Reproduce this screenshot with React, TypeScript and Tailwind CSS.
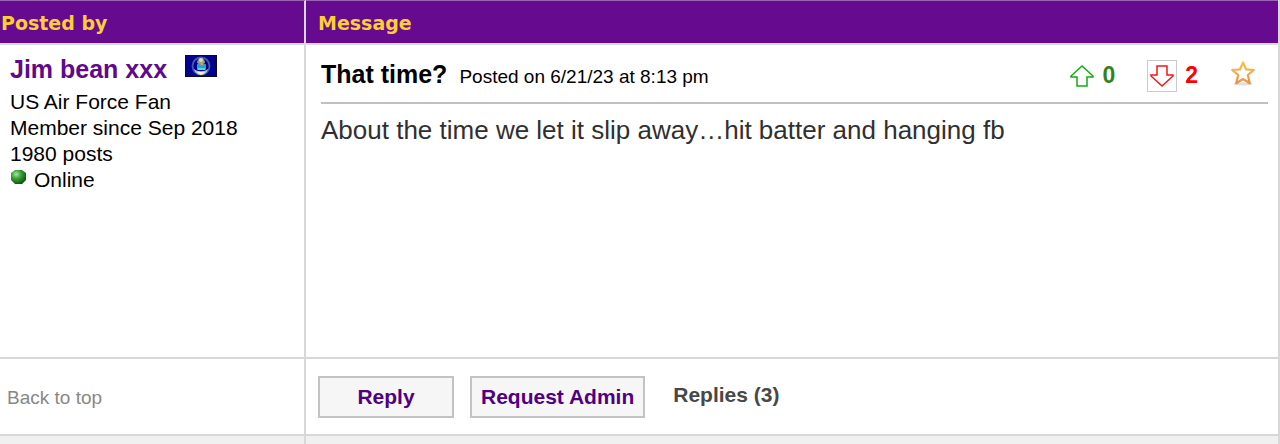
const FlagIcon = () => (
    <svg width="32" height="22" viewBox="0 0 32 22" role="img" aria-label="US Air Force">
        <rect x="0.5" y="0.5" width="31" height="21" fill="#02058c" stroke="#0b0c24" />
        <circle cx="16" cy="11" r="8.5" fill="none" stroke="#4a58ac" strokeWidth="1.8" />
        <path d="M9 14c3 3 11 3 14 0-1 4-4 6-7 6s-6-2-7-6z" fill="#a9c9c4" />
        <path d="M12 17h8l-4 3z" fill="#f2f0dc" />
        <rect x="12" y="9" width="9" height="6" rx="1" fill="#2f9fd0" />
        <path d="M13 13h7v2h-7z" fill="#55d4e4" />
        <path d="M12 8c0-3 2-5 4-5s4 2 4 5l-4 2z" fill="#9b9c88" />
        <circle cx="16" cy="5" r="2" fill="#d9d6bd" />
        <circle cx="17" cy="9" r="1.3" fill="#d9a43a" />
    </svg>
);

const OnlineIcon = () => (
    <svg width="16" height="16" viewBox="0 0 16 16" aria-hidden="true">
        <defs>
            <radialGradient id="online" cx="0.35" cy="0.3" r="0.75">
                <stop offset="0" stopColor="#a4e8a0" />
                <stop offset="0.4" stopColor="#3fa53f" />
                <stop offset="1" stopColor="#075407" />
            </radialGradient>
        </defs>
        <path d="M5 1h7l4 3v7l-4 4H5l-4-4V4z" fill="url(#online)" />
    </svg>
);

const UpIcon = () => (
    <svg width="24" height="22" viewBox="0 0 24 22" fill="white" stroke="#10ad10" strokeWidth="1.5" aria-hidden="true">
        <path d="M12 1L1 11v1h6v9h10v-9h6v-1z" />
    </svg>
);

const DownIcon = () => (
    <svg width="24" height="22" viewBox="0 0 24 22" fill="white" stroke="#fa1414" strokeWidth="1.5" aria-hidden="true">
        <path d="M12 21L1 11v-1h6V1h10v9h6v1z" />
    </svg>
);

const StarIcon = () => (
    <svg width="26" height="26" viewBox="0 0 26 26" aria-hidden="true">
        <defs>
            <linearGradient id="star" x1="0" y1="0" x2="0" y2="1">
                <stop offset="0" stopColor="#f8c34c" />
                <stop offset="1" stopColor="#e8924a" />
            </linearGradient>
        </defs>
        <ellipse cx="13" cy="24" rx="10" ry="1.5" fill="#dedede" />
        <path
            d="M13 2.500l3 6.800 7.800.7-6 5 2 8.200-6.800-4.200L6.200 23.200l2-8.200-6-5 7.800-.7z"
            fill="white"
            stroke="url(#star)"
            strokeWidth="2.2"
            strokeLinejoin="round"
        />
    </svg>
);

const App = () => {
    return (
        <div className="w-full bg-[#f0f0f0] font-['Liberation_Sans',Arial,sans-serif] text-black">
            <table className="w-full table-fixed border-separate border-spacing-0 border-r-2 border-[#d8d8d8] bg-white">
                <thead className="bg-[#660a8f] text-left font-['DejaVu_Sans',Verdana,sans-serif] text-[19px] leading-10 text-[#fbce33]">
                    <tr>
                        <th className="w-[306px] border-t border-r-2 border-b-2 border-t-[#9a63b3] border-r-[#d8d8d8] border-b-[#d8d8d8] px-px pt-0.5">Posted by</th>
                        <th className="border-t border-b-2 border-t-[#9a63b3] border-b-[#d8d8d8] px-3 pt-0.5">Message</th>
                    </tr>
                </thead>
                <tbody>
                    <tr className="align-top">
                        <td className="h-[314px] border-r-2 border-b-2 border-[#d8d8d8] px-[10px] pt-2 text-[21px] leading-[26px]">
                            <div className="mb-1 flex items-center gap-[18px] text-[25px] leading-8">
                                <a href="#profile" className="font-bold text-[#5f0a8c]">Jim bean xxx</a>
                                <div className="pb-1.5"><FlagIcon /></div>
                            </div>
                            <p>US Air Force Fan</p>
                            <p>Member since Sep 2018</p>
                            <p>1980 posts</p>
                            <p className="flex items-center gap-2">
                                <span className="pb-1.5"><OnlineIcon /></span>
                                Online
                            </p>
                        </td>
                        <td className="border-b-2 border-[#d8d8d8] pr-[10px] pl-[15px]">
                            <div className="flex h-[59px] items-center justify-between border-b-2 border-[#c0c0c0]">
                                <div className="flex items-baseline gap-3 pt-0.5">
                                    <h2 className="text-[25px] font-bold">That time?</h2>
                                    <span className="text-[19px]">Posted on 6/21/23 at 8:13 pm</span>
                                </div>
                                <div className="flex items-center pt-1 pr-3 text-[23px] font-bold">
                                    <button type="button" aria-label="Upvote"><UpIcon /></button>
                                    <span className="ml-2 text-[#348219]">0</span>
                                    <button type="button" aria-label="Downvote" className="ml-8 border border-[#cccccc] px-0.5 py-1"><DownIcon /></button>
                                    <span className="ml-2 text-[#ff0000]">2</span>
                                    <button type="button" aria-label="Favorite" className="ml-8 pb-1.5"><StarIcon /></button>
                                </div>
                            </div>
                            <p className="pt-2 text-[26px] leading-9 text-[#303030]">About the time we let it slip away…hit batter and hanging fb</p>
                        </td>
                    </tr>
                    <tr>
                        <td className="h-[77px] border-r-2 border-b-2 border-[#d8d8d8] px-[7px] pt-1 text-[19px]">
                            <a href="#top" className="text-[#888888]">Back to top</a>
                        </td>
                        <td className="border-b-2 border-[#d8d8d8] px-3">
                            <div className="flex items-center gap-4 text-[21px] font-bold">
                                <button type="button" className="h-[42px] w-[136px] border-2 border-[#c3c3c3] bg-[#f6f6f6] text-[#500082]">Reply</button>
                                <button type="button" className="h-[42px] border-2 border-[#c3c3c3] bg-[#f6f6f6] px-[9px] text-[#500082]">Request Admin</button>
                                <span className="ml-3 pb-1 text-[#484848]">Replies (3)</span>
                            </div>
                        </td>
                    </tr>
                </tbody>
                <tfoot>
                    <tr className="bg-[#f0f0f0]">
                        <td className="h-2 border-r-2 border-[#d8d8d8]" />
                        <td />
                    </tr>
                </tfoot>
            </table>
        </div>
    );
};

export default App;
